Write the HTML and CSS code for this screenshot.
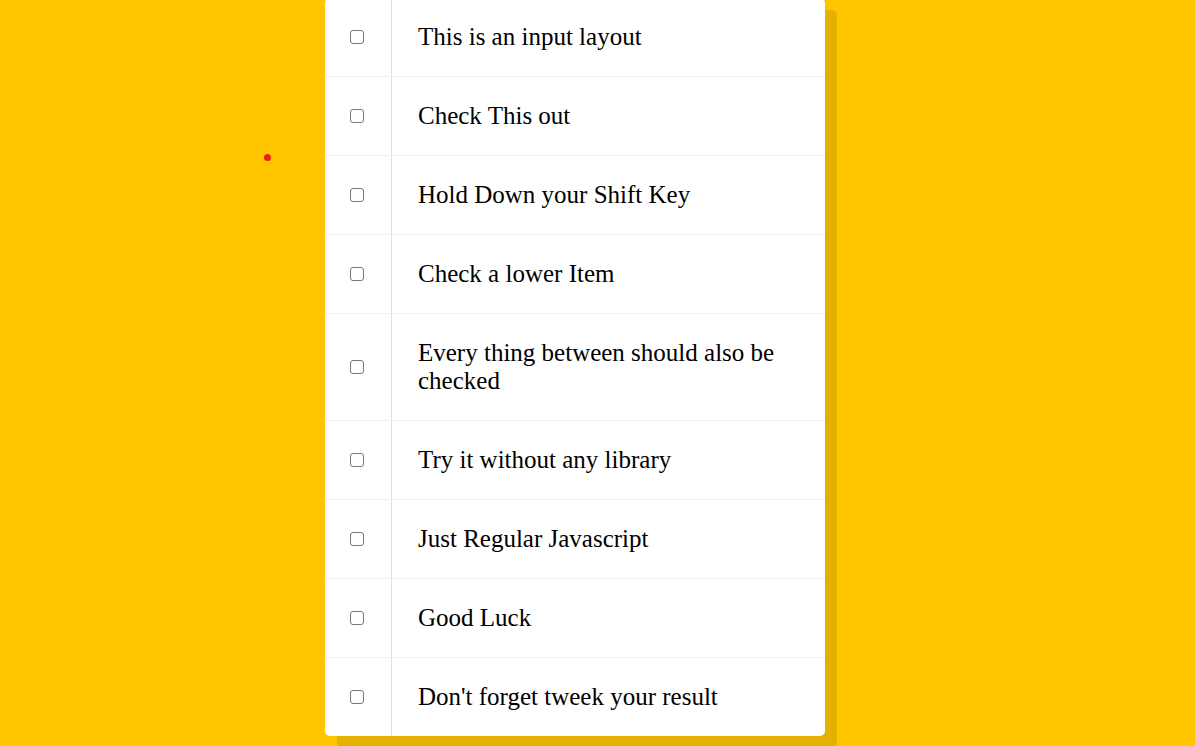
FILE: index.html
```html
<!DOCTYPE html>
<html>
<head>
<meta charset="utf-8">
<link rel="stylesheet" href="styles.css">
</head>
<body>
<div class="inbox">
  <div class="item"><span class="box"><input type="checkbox"></span><p>This is an input layout</p></div>
  <div class="item"><span class="box"><input type="checkbox"></span><p>Check This out</p></div>
  <div class="item"><span class="box"><input type="checkbox"></span><p>Hold Down your Shift Key</p></div>
  <div class="item"><span class="box"><input type="checkbox"></span><p>Check a lower Item</p></div>
  <div class="item"><span class="box"><input type="checkbox"></span><p>Every thing between should also be checked</p></div>
  <div class="item"><span class="box"><input type="checkbox"></span><p>Try it without any library</p></div>
  <div class="item"><span class="box"><input type="checkbox"></span><p>Just Regular Javascript</p></div>
  <div class="item"><span class="box"><input type="checkbox"></span><p>Good Luck</p></div>
  <div class="item"><span class="box"><input type="checkbox"></span><p>Don't forget tweek your result</p></div>
</div>
<div class="dot"></div>
</body>
</html>
```
FILE: styles.css
```css
html {
  background: #ffc600;
  font-family: "Liberation Serif", "Times New Roman", serif;
}
body {
  margin: 0;
  height: 746px;
  overflow: hidden;
  position: relative;
}
.inbox {
  width: 500px;
  margin: -2px 0 0 325px;
  background: #fff;
  border-radius: 5px;
  box-shadow: 12px 12px 0 rgba(0, 0, 0, 0.1);
}
.item {
  display: flex;
  align-items: center;
  border-bottom: 1px solid #f1f1f1;
}
.item:last-child {
  border-bottom: 0;
}
.box {
  display: flex;
  align-items: center;
  padding: 0 27px 1px 25px;
}
.box input {
  appearance: none;
  -webkit-appearance: none;
  margin: 0;
  width: 14px;
  height: 14px;
  border: 1px solid #767676;
  border-radius: 3px;
  background: #fff;
}
.item p {
  flex: 1;
  margin: 0;
  padding: 25px 26px;
  font-size: 25px;
  line-height: 28px;
  color: #000;
  border-left: 1px solid #d1e2ff;
}
.dot {
  position: absolute;
  left: 264px;
  top: 154px;
  width: 7px;
  height: 7px;
  border-radius: 50%;
  background: #e8201e;
}
```
